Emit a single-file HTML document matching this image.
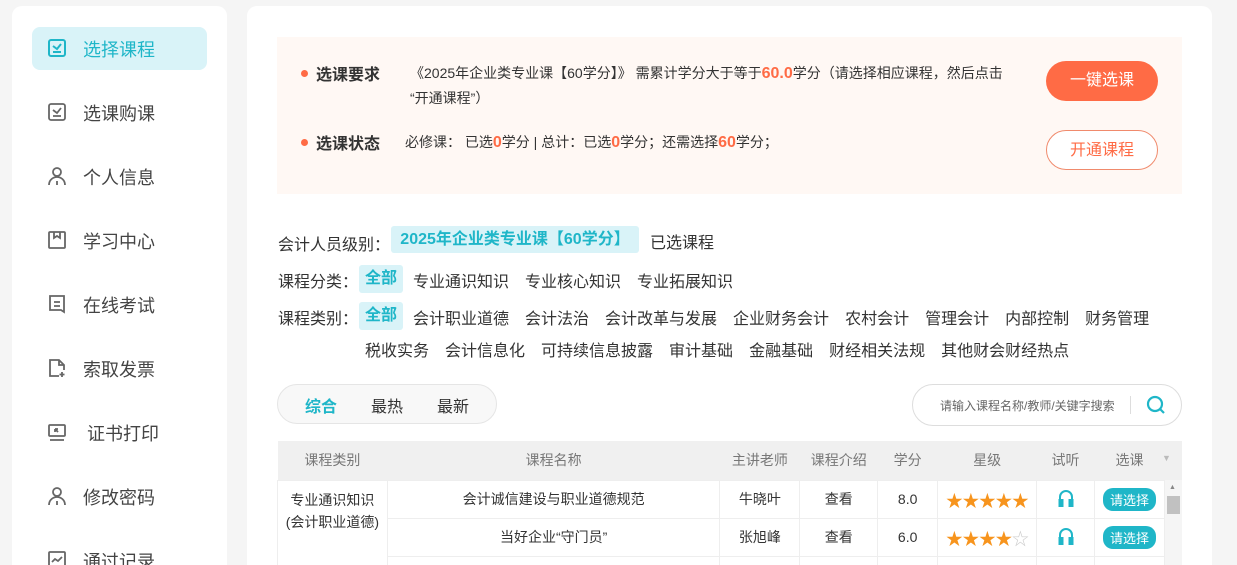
<!DOCTYPE html>
<html><head><meta charset="utf-8"><style>
*{margin:0;padding:0;box-sizing:border-box}
html,body{width:1237px;height:565px;overflow:hidden}
body{background:#f5f5f5;font-family:"Liberation Sans","Noto Sans CJK SC",sans-serif;color:#333}
#w{position:absolute;left:0;top:0;width:1237px;height:565px;overflow:hidden}
.side{position:absolute;left:12px;top:6px;width:215px;height:580px;background:#fff;border-radius:10px}
.mi{position:absolute;left:20px;width:175px;height:43px;border-radius:8px;font-size:18px;color:#444}
.mi svg{position:absolute;left:15px;top:11px}
.mi span{position:absolute;left:51px;top:9px}
.mi.act{background:#d9f3f8;color:#1fb6c8}
.main{position:absolute;left:247px;top:6px;width:965px;height:580px;background:#fff;border-radius:10px}
.box{position:absolute;left:277px;top:37px;width:905px;height:157px;background:#fff8f4}
.dot{position:absolute;width:7px;height:7px;border-radius:50%;background:#ff6b45}
.abs{position:absolute;white-space:nowrap}
.o{color:#ff6b45;font-weight:bold}
.btn{position:absolute;left:1046px;width:112px;height:40px;border-radius:20px;font-size:16px;text-align:center;line-height:40px}
.f{font-size:16px;color:#333}
.f span{margin-right:16px}
.tag{position:absolute;background:#d9f3f8;color:#1fb6c8;font-weight:bold;border-radius:3px;text-align:center}
table{position:absolute;left:277px;top:441px;width:888px;border-collapse:collapse;font-size:14px}
th{background:#f0f0f0;color:#777;font-weight:normal;height:39px}
td{height:38px;text-align:center;border:1px solid #eee;color:#333}
.st{color:#f7941d;font-size:17px;letter-spacing:-0.5px}
.sel{display:inline-block;background:#1fb6c8;color:#fff;border-radius:10px;padding:2px 7px;font-size:13px}
</style></head><body><div id="w">
<div class="side"></div>
<div class="main"></div>
<div style="position:absolute;left:12px;top:0">
<div class="mi act" style="top:27px"><svg width="20" height="20" viewBox="0 0 20 20" fill="none" stroke="#1fb6c8" stroke-width="2"><rect x="2" y="2" width="16" height="16" rx="2"/><path d="M6 8l4 3 4-5M6 14h8"/></svg><span>选择课程</span></div>
<div class="mi" style="top:91px"><svg width="20" height="20" viewBox="0 0 20 20" fill="none" stroke="#666" stroke-width="1.8"><rect x="2" y="2" width="16" height="16" rx="2"/><path d="M6 8l4 3 4-5M6 14h8"/></svg><span>选课购课</span></div>
<div class="mi" style="top:155px"><svg width="20" height="20" viewBox="0 0 20 20" fill="none" stroke="#666" stroke-width="1.8"><circle cx="10" cy="6" r="4"/><path d="M2 19c0-5 4-8 8-8s8 3 8 8M10 15v4"/></svg><span>个人信息</span></div>
<div class="mi" style="top:219px"><svg width="20" height="20" viewBox="0 0 20 20" fill="none" stroke="#666" stroke-width="1.8"><rect x="2" y="2" width="16" height="16" rx="1"/><path d="M7 2v6l3-2 3 2V2"/></svg><span>学习中心</span></div>
<div class="mi" style="top:283px"><svg width="20" height="20" viewBox="0 0 20 20" fill="none" stroke="#666" stroke-width="1.8"><path d="M3 2h14v16l-3-2H3z"/><path d="M7 8h6M7 12h6"/></svg><span>在线考试</span></div>
<div class="mi" style="top:347px"><svg width="20" height="20" viewBox="0 0 20 20" fill="none" stroke="#666" stroke-width="1.8"><path d="M12 18H3V2h9l5 5v5M12 2v5h5M15 14v5M12.5 16.5h5"/></svg><span>索取发票</span></div>
<div class="mi" style="top:411px"><svg width="20" height="20" viewBox="0 0 20 20" fill="none" stroke="#666" stroke-width="1.8"><rect x="2" y="3" width="16" height="11" rx="1"/><path d="M3 18h14M8 7l3 3M8 7h3M8 7v3"/></svg><span style="left:55px">证书打印</span></div>
<div class="mi" style="top:475px"><svg width="20" height="20" viewBox="0 0 20 20" fill="none" stroke="#666" stroke-width="1.8"><circle cx="10" cy="6" r="4"/><path d="M2 19c0-5 4-8 8-8s8 3 8 8M10 15v4"/></svg><span>修改密码</span></div>
<div class="mi" style="top:539px"><svg width="20" height="20" viewBox="0 0 20 20" fill="none" stroke="#666" stroke-width="1.8"><rect x="2" y="2" width="16" height="16" rx="1"/><path d="M5 12l3-3 3 2 4-4"/></svg><span>通过记录</span></div>
</div>

<div class="box"></div>
<div class="dot" style="left:301px;top:70px"></div>
<div class="abs" style="left:316px;top:61px;font-size:16px;font-weight:bold">选课要求</div>
<div class="abs" style="left:410px;top:61px;font-size:14px;line-height:24px">《2025年企业类专业课【60学分】》 需累计学分大于等于<span class="o" style="font-size:16px">60.0</span>学分（请选择相应课程，然后点击<br>“开通课程”）</div>
<div class="dot" style="left:301px;top:139px"></div>
<div class="abs" style="left:316px;top:130px;font-size:16px;font-weight:bold">选课状态</div>
<div class="abs" style="left:405px;top:132px;font-size:14px">必修课： 已选<span class="o" style="font-size:16px">0</span>学分 | 总计：已选<span class="o" style="font-size:16px">0</span>学分；还需选择<span class="o" style="font-size:16px">60</span>学分；</div>
<div class="btn" style="top:61px;background:#ff6b45;color:#fff">一键选课</div>
<div class="btn" style="top:130px;border:1px solid #f08a6c;color:#ff6b45;background:#fff">开通课程</div>

<div class="abs f" style="left:278px;top:231px">会计人员级别：</div>
<div class="tag" style="left:391px;top:226px;width:248px;height:27px;line-height:27px;font-size:16px">2025年企业类专业课【60学分】</div>
<div class="abs f" style="left:650px;top:229px">已选课程</div>
<div class="abs f" style="left:278px;top:268px">课程分类：</div>
<div class="tag" style="left:359px;top:265px;width:44px;height:28px;line-height:28px;font-size:16px">全部</div>
<div class="abs f" style="left:413px;top:268px"><span>专业通识知识</span><span>专业核心知识</span><span>专业拓展知识</span></div>
<div class="abs f" style="left:278px;top:305px">课程类别：</div>
<div class="tag" style="left:359px;top:302px;width:44px;height:28px;line-height:28px;font-size:16px">全部</div>
<div class="abs f" style="left:413px;top:305px"><span>会计职业道德</span><span>会计法治</span><span>会计改革与发展</span><span>企业财务会计</span><span>农村会计</span><span>管理会计</span><span>内部控制</span><span>财务管理</span></div>
<div class="abs f" style="left:365px;top:337px"><span>税收实务</span><span>会计信息化</span><span>可持续信息披露</span><span>审计基础</span><span>金融基础</span><span>财经相关法规</span><span>其他财会财经热点</span></div>

<div class="abs" style="left:277px;top:384px;width:220px;height:40px;border:1px solid #e5e5e5;border-radius:20px;background:#f8f8f8"></div>
<div class="abs" style="left:305px;top:393px;font-size:16px;color:#1fb6c8;font-weight:bold">综合</div>
<div class="abs" style="left:371px;top:393px;font-size:16px">最热</div>
<div class="abs" style="left:437px;top:393px;font-size:16px">最新</div>
<div class="abs" style="left:912px;top:384px;width:270px;height:42px;border:1px solid #ddd;border-radius:21px;background:#fff"></div>
<div class="abs" style="left:940px;top:397px;font-size:12px;color:#666">请输入课程名称/教师/关键字搜索</div>
<div class="abs" style="left:1130px;top:396px;width:1px;height:18px;background:#ddd"></div>
<svg class="abs" style="left:1146px;top:395px" width="20" height="20" viewBox="0 0 20 20" fill="none" stroke="#1fb6c8" stroke-width="2.2"><circle cx="9" cy="9" r="7"/><path d="M14 14l4 4"/></svg>

<table>
<tr><th style="width:110px">课程类别</th><th style="width:333px">课程名称</th><th style="width:80px">主讲老师</th><th style="width:78px">课程介绍</th><th style="width:60px">学分</th><th style="width:99px">星级</th><th style="width:58px">试听</th><th style="width:70px">选课</th></tr>
<tr><td rowspan="3" style="vertical-align:top;padding-top:8px;line-height:22px">专业通识知识<br>(会计职业道德)</td><td>会计诚信建设与职业道德规范</td><td>牛晓叶</td><td>查看</td><td>8.0</td><td class="st">★★★★★</td><td><svg width="16" height="18" viewBox="0 0 16 18" fill="none" stroke="#1fb6c8" stroke-width="2"><path d="M2 13V8a6 6 0 0112 0v5"/><rect x="1.5" y="11" width="3" height="6" fill="#1fb6c8"/><rect x="11.5" y="11" width="3" height="6" fill="#1fb6c8"/></svg></td><td><span class="sel">请选择</span></td></tr>
<tr><td>当好企业“守门员”</td><td>张旭峰</td><td>查看</td><td>6.0</td><td class="st">★★★★<span style="color:#ccc">☆</span></td><td><svg width="16" height="18" viewBox="0 0 16 18" fill="none" stroke="#1fb6c8" stroke-width="2"><path d="M2 13V8a6 6 0 0112 0v5"/><rect x="1.5" y="11" width="3" height="6" fill="#1fb6c8"/><rect x="11.5" y="11" width="3" height="6" fill="#1fb6c8"/></svg></td><td><span class="sel">请选择</span></td></tr>
<tr><td></td><td></td><td></td><td></td><td></td><td></td><td></td></tr>
</table>
<div class="abs" style="left:1165px;top:441px;width:17px;height:39px;background:#f0f0f0"></div>
<div class="abs" style="left:1162px;top:453px;font-size:9px;color:#bbb">▼</div>
<div class="abs" style="left:1165px;top:480px;width:17px;height:90px;background:#f5f5f5"></div>
<div class="abs" style="left:1169px;top:484px;font-size:7px;color:#888">▲</div>
<div class="abs" style="left:1167px;top:496px;width:13px;height:18px;background:#c1c1c1"></div>
</div></body></html>
